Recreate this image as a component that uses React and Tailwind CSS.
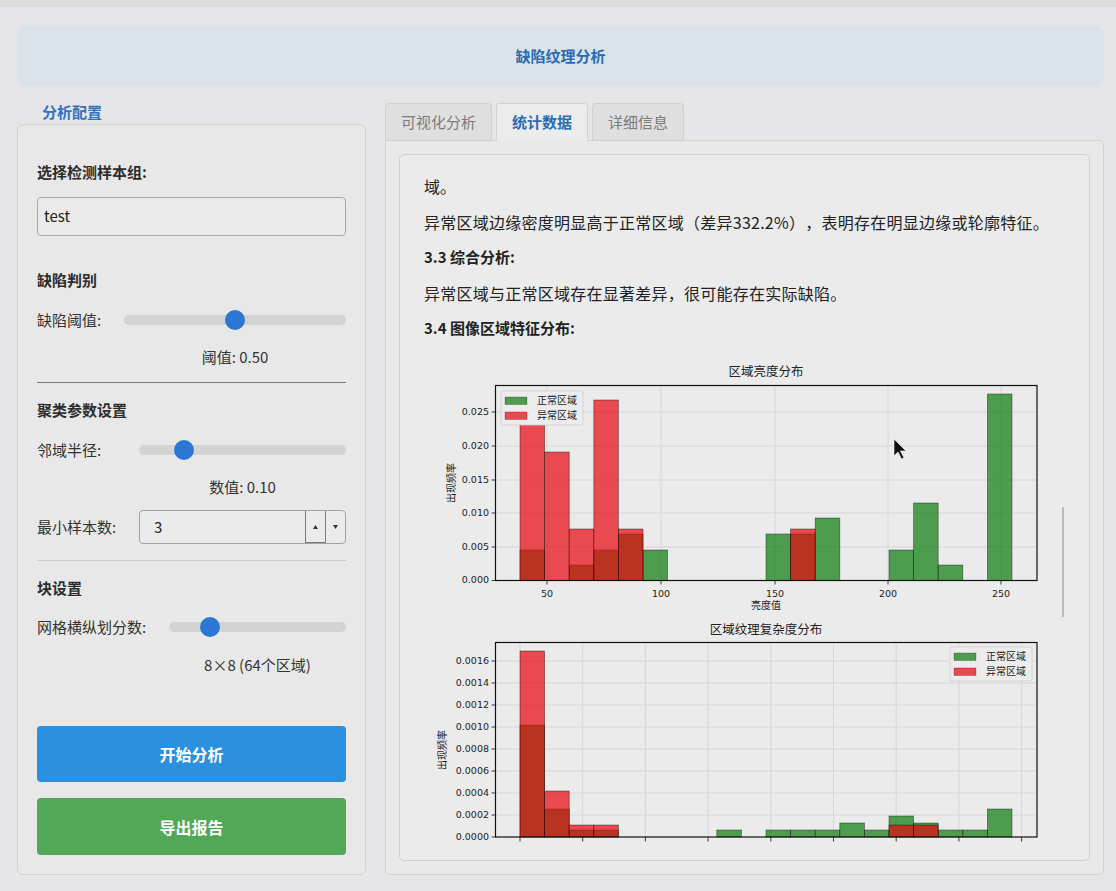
import React from "react";

const BIN = 24.6;
const bx = (i) => 520 + BIN * i;

// [bin, green top, red top] in page pixels
const brightness = [
  [0, 550, 418], [1, null, 452], [2, 565, 529], [3, 550, 400], [4, 534, 529],
  [5, 550, null], [10, 534, null], [11, 534, 529], [12, 518, null],
  [15, 550, null], [16, 503, null], [17, 565, null], [19, 394, null],
];

const texture = [
  [0, 725, 651], [1, 809, 791], [2, 830, 825], [3, 830, 825], [8, 830, null],
  [10, 830, null], [11, 830, null], [12, 830, null], [13, 823, null], [14, 830, null],
  [15, 816, 825], [16, 823, 825], [17, 830, null], [18, 830, null], [19, 809, null],
];

const CJK = "'Noto Sans CJK SC', 'Noto Sans', sans-serif";
const MONO = "'DejaVu Sans', sans-serif";

function Bars({ data, base }) {
  return (
    <>
      {data.filter((d) => d[1] != null).map(([i, g]) => (
        <rect key={`g${i}`} x={bx(i)} y={g} width={BIN} height={base - g} fill="#0c7c0c" fillOpacity="0.7" stroke="#000" strokeOpacity="0.45" strokeWidth="0.8" />
      ))}
      {data.filter((d) => d[2] != null).map(([i, , r]) => (
        <rect key={`r${i}`} x={bx(i)} y={r} width={BIN} height={base - r} fill="#e8060e" fillOpacity="0.7" stroke="#000" strokeOpacity="0.45" strokeWidth="0.8" />
      ))}
    </>
  );
}

function Legend({ x, y }) {
  return (
    <g>
      <rect x={x} y={y} width="82" height="34" rx="2" fill="#ececec" stroke="#cfcfcf" strokeWidth="0.8" />
      <rect x={x + 4} y={y + 6} width="22" height="7.5" fill="#0c7c0c" fillOpacity="0.7" stroke="#000" strokeOpacity="0.4" strokeWidth="0.6" />
      <rect x={x + 4} y={y + 21} width="22" height="7.5" fill="#e8060e" fillOpacity="0.7" stroke="#000" strokeOpacity="0.4" strokeWidth="0.6" />
      <text x={x + 36} y={y + 10} fontSize="10" fill="#222" fontFamily={CJK} dominantBaseline="middle">正常区域</text>
      <text x={x + 36} y={y + 25} fontSize="10" fill="#222" fontFamily={CJK} dominantBaseline="middle">异常区域</text>
    </g>
  );
}

function Charts() {
  const y1 = [[580.5, "0.000"], [547, "0.005"], [513, "0.010"], [480, "0.015"], [446, "0.020"], [412, "0.025"]];
  const x1 = [[547, "50"], [661, "100"], [775, "150"], [888, "200"], [1001, "250"]];
  const y2 = [[837, "0.0000"], [815, "0.0002"], [793, "0.0004"], [771, "0.0006"], [749, "0.0008"], [727, "0.0010"], [705, "0.0012"], [683, "0.0014"], [661, "0.0016"]];
  const x2 = [520, 582.7, 645.4, 708.1, 770.8, 833.5, 896.2, 958.9, 1021.6];

  return (
    <svg className="mt-[15px] block" width="640" height="490" viewBox="424 355 640 490">
      {/* chart 1 */}
      <text x="766" y="373" fontSize="12.5" fill="#222" fontFamily={CJK} textAnchor="middle" dominantBaseline="middle">区域亮度分布</text>
      {y1.slice(1).map(([y]) => (
        <line key={y} x1="495.5" x2="1037" y1={y} y2={y} stroke="#d2d2d2" strokeWidth="0.8" />
      ))}
      {x1.map(([x]) => (
        <line key={x} x1={x} x2={x} y1="385.5" y2="580.5" stroke="#d2d2d2" strokeWidth="0.8" />
      ))}
      <Bars data={brightness} base={580.5} />
      <rect x="495.5" y="385.5" width="541.5" height="195" fill="none" stroke="#111" strokeWidth="1.2" />
      {y1.map(([y, t]) => (
        <g key={t}>
          <line x1="491.5" x2="495.5" y1={y} y2={y} stroke="#111" strokeWidth="0.8" />
          <text x="489" y={y} fontSize="9.5" fill="#222" fontFamily={MONO} textAnchor="end" dominantBaseline="middle">{t}</text>
        </g>
      ))}
      {x1.map(([x, t]) => (
        <g key={t}>
          <line x1={x} x2={x} y1="580.5" y2="584.5" stroke="#111" strokeWidth="0.8" />
          <text x={x} y="594" fontSize="9.5" fill="#222" fontFamily={MONO} textAnchor="middle" dominantBaseline="middle">{t}</text>
        </g>
      ))}
      <text x="766" y="606" fontSize="10" fill="#222" fontFamily={CJK} textAnchor="middle" dominantBaseline="middle">亮度值</text>
      <text x="452" y="483" fontSize="10" fill="#222" fontFamily={CJK} textAnchor="middle" dominantBaseline="middle" transform="rotate(-90 452 483)">出现频率</text>
      <Legend x={501} y={391} />

      {/* chart 2 */}
      <text x="766" y="631" fontSize="12.5" fill="#222" fontFamily={CJK} textAnchor="middle" dominantBaseline="middle">区域纹理复杂度分布</text>
      {y2.slice(1).map(([y]) => (
        <line key={y} x1="495.5" x2="1037" y1={y} y2={y} stroke="#d2d2d2" strokeWidth="0.8" />
      ))}
      {x2.map((x) => (
        <line key={x} x1={x} x2={x} y1="642.5" y2="837" stroke="#d2d2d2" strokeWidth="0.8" />
      ))}
      <Bars data={texture} base={837} />
      <rect x="495.5" y="642.5" width="541.5" height="194.5" fill="none" stroke="#111" strokeWidth="1.2" />
      {y2.map(([y, t]) => (
        <g key={t}>
          <line x1="491.5" x2="495.5" y1={y} y2={y} stroke="#111" strokeWidth="0.8" />
          <text x="489" y={y} fontSize="9.5" fill="#222" fontFamily={MONO} textAnchor="end" dominantBaseline="middle">{t}</text>
        </g>
      ))}
      {x2.map((x) => (
        <line key={`t${x}`} x1={x} x2={x} y1="837" y2="841.5" stroke="#111" strokeWidth="0.8" />
      ))}
      <text x="443" y="750" fontSize="10" fill="#222" fontFamily={CJK} textAnchor="middle" dominantBaseline="middle" transform="rotate(-90 443 750)">出现频率</text>
      <Legend x={950} y={647} />

      {/* mouse pointer */}
      <path d="M894 439 L894 456 L898 452 L901.5 459 L904 458 L900.5 451 L906 451 Z" fill="#111" stroke="#fff" strokeWidth="0.6" />
    </svg>
  );
}

function Slider({ pos }) {
  return (
    <div className="relative h-5 w-full">
      <div className="absolute left-0 right-0 top-[5px] h-[10px] rounded-full bg-[#d3d3d3]" />
      <div
        className="absolute top-0 h-5 w-5 rounded-full bg-[#2b77d3]"
        style={{ left: `calc(${pos * 100}% - ${pos * 20}px)` }}
      />
    </div>
  );
}

function SliderRow({ label, labelW, pos, value, className, valueGap }) {
  return (
    <div className={`flex items-start gap-[21px] ${className}`}>
      <span className={`h-5 shrink-0 whitespace-nowrap text-[15px] leading-5 text-[#333] ${labelW}`}>{label}</span>
      <div className="flex flex-1 flex-col">
        <Slider pos={pos} />
        <div className={`h-5 text-center text-[15px] leading-5 text-[#333] ${valueGap}`}>{value}</div>
      </div>
    </div>
  );
}

function SpinBox() {
  return (
    <div className="flex h-[34px] flex-1 items-stretch rounded-[4px] border border-[#a3a3a3] bg-[#ebebeb]">
      <span className="flex flex-1 items-center pl-[14px] text-[15px] text-[#222]">3</span>
      <div className="flex w-[20px] items-center justify-center border-b border-l border-[#7a7a7a]">
        <svg width="5" height="4" viewBox="0 0 5 4"><path d="M2.5 0 L5 4 L0 4 Z" fill="#333" /></svg>
      </div>
      <div className="flex w-[20px] items-center justify-center border-l border-[#7a7a7a]">
        <svg width="5" height="4" viewBox="0 0 5 4"><path d="M0 0 L5 0 L2.5 4 Z" fill="#333" /></svg>
      </div>
    </div>
  );
}

function Section({ children, className }) {
  return <div className={`h-5 text-[15px] font-bold leading-5 text-[#2d2d2d] ${className}`}>{children}</div>;
}

export default function App() {
  const tabs = ["可视化分析", "统计数据", "详细信息"];
  const active = 1;

  return (
    <div className="h-[891px] w-full overflow-hidden bg-[#e6e6e8] font-['Noto_Sans_CJK_SC','Noto_Sans',sans-serif]">
      <div className="h-[7px] bg-[#dcdcdd]" />
      <div className="pl-[17px] pr-[12px] pt-[19px]">
        {/* header */}
        <div className="flex h-[61px] items-center justify-center rounded-[8px] bg-[#dbe3ea]">
          <span className="text-[15px] font-bold text-[#2b6cb3]">缺陷纹理分析</span>
        </div>

        <div className="flex gap-[19px]">
          {/* left column */}
          <div className="flex w-[349px] shrink-0 flex-col">
            <div className="mt-[15px] h-5 pl-[25px] text-[15px] font-bold leading-5 text-[#2d74c2]">分析配置</div>
            <div className="mt-[2px] h-[751px] rounded-[6px] border border-[#d3d3d3] bg-[#e8e8e8] px-[19px] pt-[37px]">
              <Section>选择检测样本组:</Section>
              <div className="mt-[15px] flex h-[39px] items-center rounded-[4px] border border-[#a8a8a8] bg-[#ebebeb] px-[6px] text-[15px] text-[#222]">
                test
              </div>

              <Section className="mt-[34px]">缺陷判别</Section>
              <SliderRow className="mt-[20px]" label="缺陷阈值:" labelW="w-[66px]" pos={0.5} value="阈值: 0.50" valueGap="mt-[17px]" />
              <div className="mt-[15px] h-px bg-[#7c7c7c]" />

              <Section className="mt-[17px]">聚类参数设置</Section>
              <SliderRow className="mt-[20px]" label="邻域半径:" labelW="w-[81px]" pos={0.187} value="数值: 0.10" valueGap="mt-[17px]" />
              <div className="mt-[13px] flex items-center gap-[21px]">
                <span className="w-[81px] shrink-0 whitespace-nowrap text-[15px] text-[#333]">最小样本数:</span>
                <SpinBox />
              </div>
              <div className="mt-[16px] h-px bg-[#cacaca]" />

              <Section className="mt-[17px]">块设置</Section>
              <SliderRow className="mt-[19px]" label="网格横纵划分数:" labelW="w-[111px]" pos={0.197} value="8×8 (64个区域)" valueGap="mt-[18px]" />

              <button className="mt-[51px] flex h-[56px] w-full items-center justify-center rounded-[4px] bg-[#2c90e1] text-[16px] font-bold text-white">
                开始分析
              </button>
              <button className="mt-[16px] flex h-[57px] w-full items-center justify-center rounded-[4px] bg-[#53a857] text-[16px] font-bold text-white">
                导出报告
              </button>
            </div>
          </div>

          {/* right column */}
          <div className="flex flex-1 flex-col pt-[16px]">
            <div className="relative z-10 -mb-px flex gap-[4px]">
              {tabs.map((t, i) => (
                <div
                  key={t}
                  className={
                    i === active
                      ? "flex h-[38px] items-center rounded-t-[4px] border border-b-0 border-[#d2d2d2] bg-[#ececec] px-[15px] text-[15px] font-bold text-[#2b6cb3]"
                      : "flex h-[38px] items-center rounded-t-[4px] border border-[#d0d0d0] bg-[#dfdfdf] px-[15px] text-[15px] text-[#7c7c7c]"
                  }
                >
                  {t}
                </div>
              ))}
            </div>
            <div className="h-[735px] rounded-[5px] rounded-tl-none border border-[#d2d2d2] bg-[#e9e9e9] p-[13px]">
              <div className="relative h-full overflow-hidden rounded-[5px] border border-[#d0d0d0] bg-[#ebebeb] pl-[24px] pt-[19px] text-[#222] [text-spacing-trim:space-all]">
                <p className="h-[24px] text-[16px] leading-[24px]">域。</p>
                <p className="mt-[11.5px] h-[24px] whitespace-nowrap text-[16px] leading-[24px] tracking-[0.25px]">
                  异常区域边缘密度明显高于正常区域（差异332.2%），表明存在明显边缘或轮廓特征。
                </p>
                <p className="mt-[11.5px] h-[24px] text-[15px] font-bold leading-[24px]">3.3 综合分析:</p>
                <p className="mt-[11.5px] h-[24px] text-[16px] leading-[24px] tracking-[0.25px]">异常区域与正常区域存在显著差异，很可能存在实际缺陷。</p>
                <p className="mt-[11.5px] h-[24px] text-[15px] font-bold leading-[24px]">3.4 图像区域特征分布:</p>
                <Charts />
                <div className="absolute left-[662px] top-[352px] h-[110px] w-[2px] bg-[#b9b9b9]" />
              </div>
            </div>
          </div>
        </div>
      </div>
    </div>
  );
}
